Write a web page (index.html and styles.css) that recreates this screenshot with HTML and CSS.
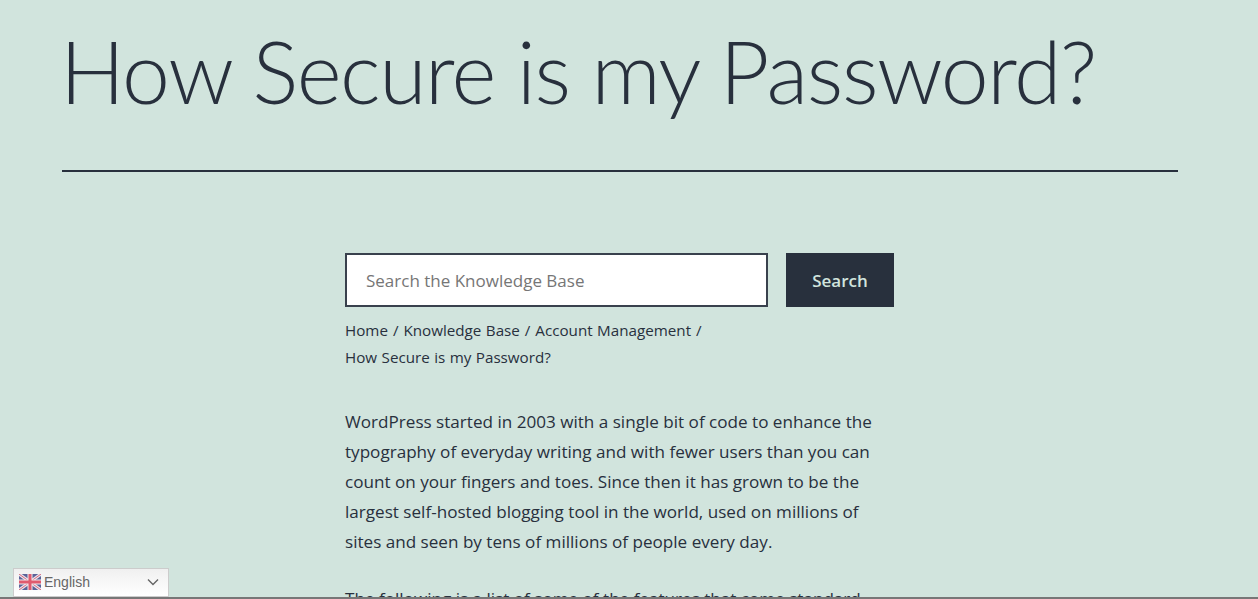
FILE: index.html
```html
<!DOCTYPE html>
<html lang="en">
<head>
<meta charset="UTF-8">
<title>How Secure is my Password?</title>
<link rel="stylesheet" href="styles.css">
</head>
<body>

    <div class="page">

        <header class="entry-header">
            <h1 class="entry-title">How Secure is my Password?</h1>
        </header>

        <div class="entry-content">

            <form class="search-form">
                <input class="search-input" type="text" placeholder="Search the Knowledge Base">
                <button class="search-button" type="button">Search</button>
            </form>

            <div class="crumbs">
                <a href="#">Home</a> <span class="sep">/</span> <a href="#">Knowledge Base</a> <span class="sep">/</span> <a href="#">Account Management</a> <span class="sep">/</span><br>
                How Secure is my Password?
            </div>

            <p>WordPress started in 2003 with a single bit of code to enhance the typography of everyday writing and with fewer users than you can count on your fingers and toes. Since then it has grown to be the largest self-hosted blogging tool in the world, used on millions of sites and seen by tens of millions of people every day.</p>

            <p>The following is a list of some of the features that come standard</p>

        </div>

    </div>

    <div class="lang-switch">
        <svg class="flag" width="22" height="16" viewBox="0 0 22 16">
            <rect width="22" height="16" fill="#5a6298"/>
            <path d="M0 0L22 16M22 0L0 16" stroke="#e8e4ea" stroke-width="3.2"/>
            <path d="M0 0L22 16M22 0L0 16" stroke="#d9667e" stroke-width="1"/>
            <path d="M11 0V16M0 8H22" stroke="#efe9ec" stroke-width="5"/>
            <path d="M11 0V16M0 8H22" stroke="#e05a6e" stroke-width="3"/>
        </svg>
        <span class="lang-name">English</span>
        <svg class="chevron" width="12" height="8" viewBox="0 0 12 8">
            <path d="M1 1.5L6 6.5L11 1.5" fill="none" stroke="#666" stroke-width="1.4"/>
        </svg>
    </div>

    <div class="bottom-edge"></div>

</body>
</html>
```

FILE: styles.css
```css
html, body {
    margin: 0;
    height: 599px;
    overflow: hidden;
}

body {
    background: #d1e4dd;
    color: #28303d;
    font-family: 'Open Sans', sans-serif;
}

a {
    color: inherit;
    text-decoration: none;
}

.entry-header {
    margin: 0 80px 0 62px;
    padding-bottom: 42px;
    border-bottom: 2px solid #28303d;
}

.entry-title {
    margin: 0 0 0 -2px;
    padding-top: 14px;
    font-family: Lato, sans-serif;
    font-size: 86px;
    line-height: 114px;
    font-weight: 300;
    letter-spacing: -1.45px;
}

.entry-content {
    width: 549px;
    margin: 81px 0 0 345px;
}

.search-form {
    display: flex;
    gap: 18px;
}

.search-input {
    box-sizing: border-box;
    width: 423px;
    height: 54px;
    padding: 0 19px;
    border: 2px solid #39414d;
    border-radius: 0;
    background: #fff;
    font-family: 'Open Sans', sans-serif;
    font-size: 17px;
}

.search-input::placeholder {
    color: #767676;
    opacity: 1;
}

.search-button {
    width: 108px;
    height: 54px;
    border: 0;
    background: #28303d;
    color: #d1e4dd;
    font-family: 'Open Sans', sans-serif;
    font-size: 17px;
    font-weight: 600;
}

.crumbs {
    width: 400px;
    margin-top: 10px;
    font-size: 15.2px;
    line-height: 27px;
    word-spacing: 0.5px;
}

.crumbs .sep {
    margin: 0 0.5px;
}

.entry-content p {
    width: 530px;
    margin: 0 0 27px;
    font-size: 17.1px;
    line-height: 30px;
}

.crumbs + p {
    margin-top: 36px;
}

.lang-switch {
    position: absolute;
    left: 13px;
    top: 568px;
    box-sizing: border-box;
    width: 156px;
    height: 29px;
    display: flex;
    align-items: center;
    padding: 0 9px 2px 5px;
    border: 1px solid #ccc;
    background: linear-gradient(#f0f0f0, #fff);
    font-family: 'Liberation Sans', sans-serif;
    font-size: 14px;
    color: #666;
}

.flag {
    flex: none;
    margin-right: 3px;
}

.lang-name {
    flex: 1;
}

.bottom-edge {
    position: absolute;
    left: 0;
    right: 0;
    top: 597px;
    height: 2px;
    background: #777;
}
```
